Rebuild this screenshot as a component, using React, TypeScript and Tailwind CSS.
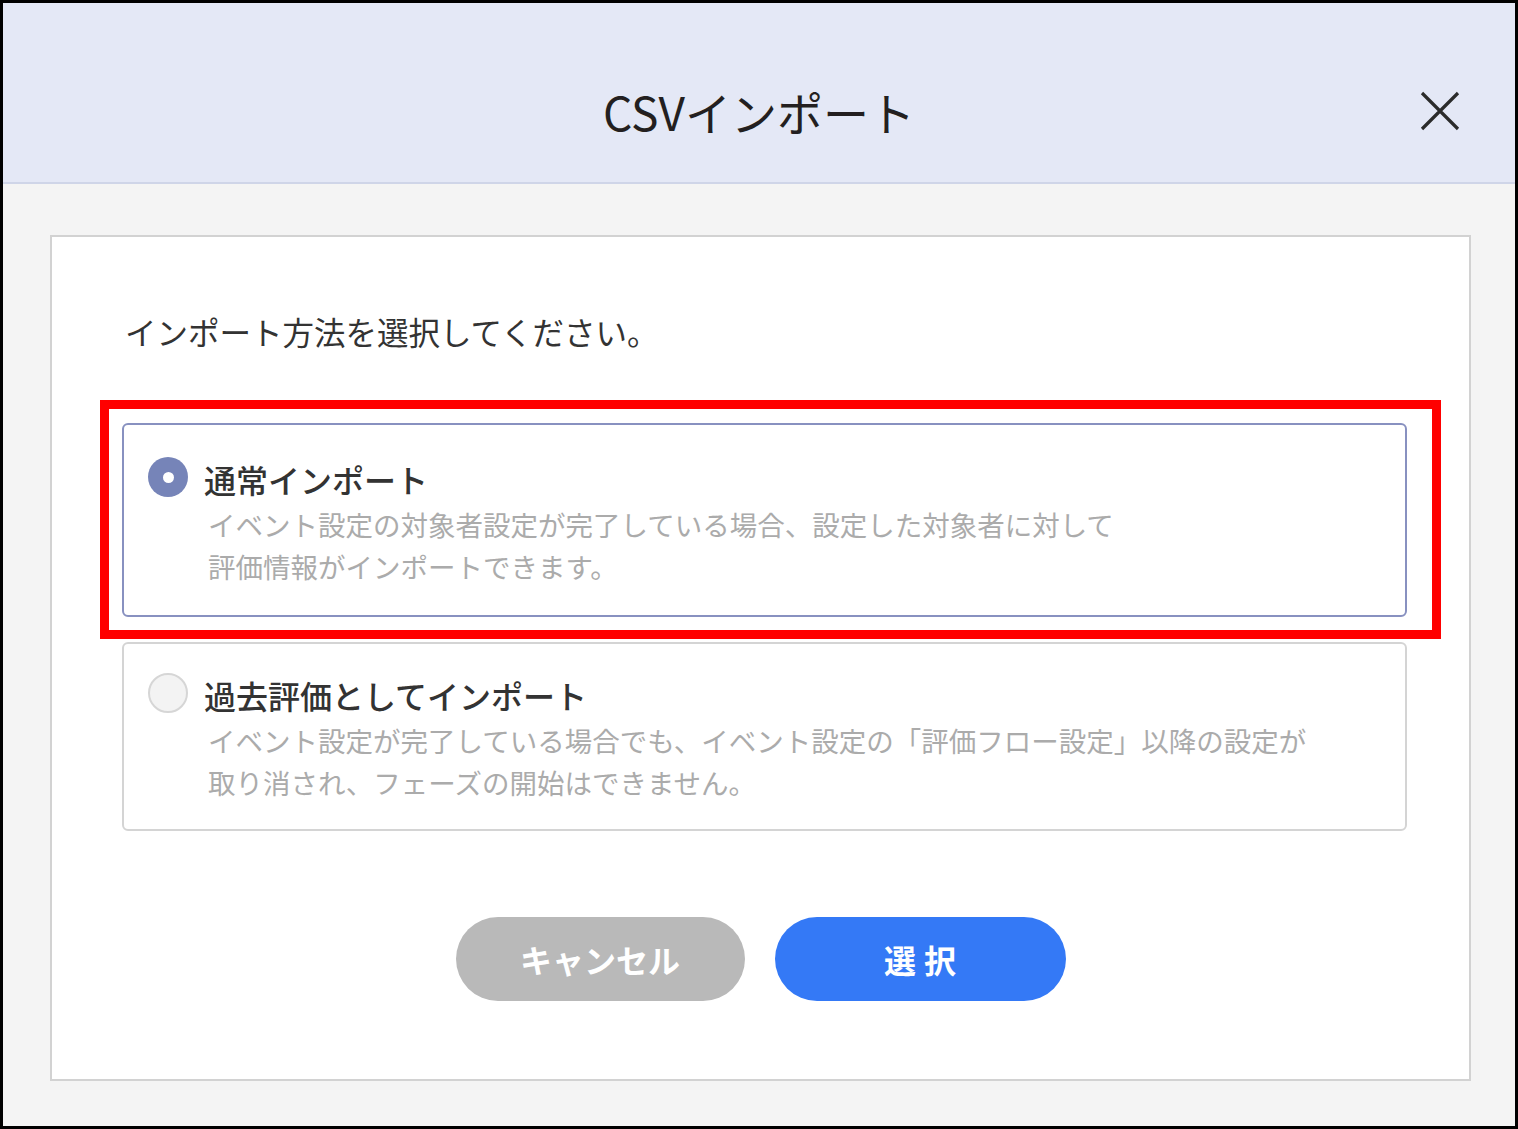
import React, { useState } from "react";

const options = [
  {
    id: "normal",
    label: "通常インポート",
    lines: [
      "イベント設定の対象者設定が完了している場合、設定した対象者に対して",
      "評価情報がインポートできます。",
    ],
    pad: "pt-[34px] pb-[28px]",
  },
  {
    id: "past",
    label: "過去評価としてインポート",
    lines: [
      "イベント設定が完了している場合でも、イベント設定の「評価フロー設定」以降の設定が",
      "取り消され、フェーズの開始はできません。",
    ],
    pad: "pt-[31px] pb-[26px]",
  },
];

const Radio = ({ checked }: { checked: boolean }) => (
  <span
    className={`mt-[-2px] flex h-[40px] w-[40px] shrink-0 items-center justify-center rounded-full ${
      checked ? "bg-[#7684b8]" : "border-2 border-[#d6d6d6] bg-[#f3f3f3]"
    }`}
  >
    {checked && <span className="h-[11px] w-[11px] rounded-full bg-white" />}
  </span>
);

export default function App() {
  const [selected, setSelected] = useState("normal");

  return (
    <div
      className="flex h-[1129px] w-[1518px] flex-col border-[3px] border-black bg-[#f4f4f4]"
      style={{ fontFamily: '"Noto Sans CJK JP", "Noto Sans", sans-serif' }}
    >
      <div className="grid h-[181px] shrink-0 grid-cols-[1fr_auto_1fr] items-center border-b-2 border-[#cfd5e8] bg-[#e4e8f6] pt-[36px]">
        <div />
        <h1 className="text-[46px] leading-[60px] text-[#231f20]">CSVインポート</h1>
        <div className="flex justify-end pr-[55px]">
          <button className="h-[40px] w-[40px]">
            <svg viewBox="0 0 40 40" className="h-[40px] w-[40px]">
              <path d="M2 2 L38 38 M38 2 L2 38" stroke="#2b2b2b" strokeWidth="3.2" fill="none" />
            </svg>
          </button>
        </div>
      </div>

      <div className="flex flex-1 flex-col pb-[45px] pl-[47px] pr-[44px] pt-[51px]">
        <div className="flex flex-1 flex-col border-2 border-[#d2d2d2] bg-white">
          <div className="pl-[70px] pr-[62px] pt-[72px]">
            <p className="pl-[3px] text-[31.5px] leading-[45px] text-[#333]">
              インポート方法を選択してください。
            </p>

            <div className="mt-[69px] flex flex-col gap-[25px]">
              {options.map((opt) => {
                const checked = selected === opt.id;
                return (
                  <div key={opt.id} className="relative">
                    <button
                      onClick={() => setSelected(opt.id)}
                      className={`flex w-full items-start gap-[16px] rounded-[6px] border-2 pl-[24px] text-left ${opt.pad} ${
                        checked ? "border-[#8891c0]" : "border-[#d4d4d4]"
                      }`}
                    >
                      <Radio checked={checked} />
                      <div>
                        <div className="text-[32px] font-medium leading-[40px] text-[#333]">
                          {opt.label}
                        </div>
                        <div className="mt-[4px] pl-[4px] text-[27.5px] leading-[42px] text-[#ababab]">
                          {opt.lines.map((l) => (
                            <div key={l}>{l}</div>
                          ))}
                        </div>
                      </div>
                    </button>
                    {opt.id === "normal" && (
                      <div className="pointer-events-none absolute -bottom-[22px] -left-[22px] -right-[34px] -top-[23px] border-[9px] border-[#ff0000]" />
                    )}
                  </div>
                );
              })}
            </div>
          </div>

          <div className="mt-[86px] flex justify-center gap-[30px]">
            <button className="h-[84px] w-[289px] rounded-full bg-[#b9b9b9] text-[32px] font-bold text-white">
              キャンセル
            </button>
            <button className="h-[84px] w-[291px] rounded-full bg-[#3479f6] pl-[8px] text-[32px] font-bold tracking-[8px] text-white">
              選択
            </button>
          </div>
        </div>
      </div>
    </div>
  );
}
